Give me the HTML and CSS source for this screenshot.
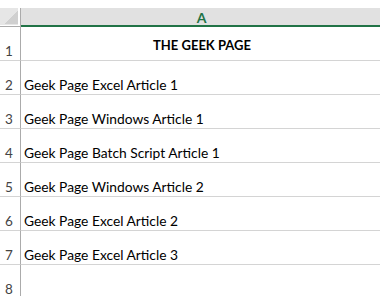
FILE: index.html
```html
<!DOCTYPE html>
<html>
<head>
<meta charset="utf-8">
<link rel="stylesheet" href="styles.css">
</head>
<body>
<div class="sheet">
  <div class="corner"><div class="tri"></div></div>
  <div class="colhead">A</div>

  <div class="rowhead">1</div>
  <div class="cell title">THE GEEK PAGE</div>

  <div class="rowhead">2</div>
  <div class="cell">Geek Page Excel Article 1</div>

  <div class="rowhead">3</div>
  <div class="cell">Geek Page Windows Article 1</div>

  <div class="rowhead">4</div>
  <div class="cell">Geek Page Batch Script Article 1</div>

  <div class="rowhead">5</div>
  <div class="cell">Geek Page Windows Article 2</div>

  <div class="rowhead">6</div>
  <div class="cell">Geek Page Excel Article 2</div>

  <div class="rowhead">7</div>
  <div class="cell">Geek Page Excel Article 3</div>

  <div class="rowhead">8</div>
  <div class="cell"></div>
</div>
</body>
</html>
```
FILE: styles.css
```css
html, body {
  margin: 0;
  padding: 0;
  background: #ffffff;
}
body {
  width: 380px;
  height: 296px;
  overflow: hidden;
  font-family: Lato, "Liberation Sans", sans-serif;
}
.sheet {
  padding-top: 8px;
  display: grid;
  grid-template-columns: 21px 359px;
  grid-template-rows: 19px 34px repeat(7, 34px);
}
.corner {
  border-right: 1px solid #ababab;
  border-bottom: 1px solid #ababab;
  box-sizing: border-box;
  position: relative;
  background: #ffffff;
}
.corner::before {
  content: "";
  position: absolute;
  left: 0; top: 0; right: 2px; bottom: 1px;
  background: #e6e6e6;
}
.tri {
  position: absolute;
  left: 4px;
  top: 2px;
  width: 14px;
  height: 14px;
  background: linear-gradient(135deg, transparent 50%, #d0d0d0 50%);
}
.colhead {
  background: #e1e1e1;
  border-bottom: 2px solid #217346;
  box-sizing: border-box;
  color: #217346;
  font-weight: bold;
  font-size: 14px;
  text-align: center;
  line-height: 19px;
  padding-left: 2px;
}
.rowhead {
  border-right: 1px solid #ababab;
  border-bottom: 1px solid #d4d4d4;
  box-sizing: border-box;
  color: #444444;
  font-size: 13.5px;
  line-height: 18px;
  padding-left: 5px;
  display: flex;
  align-items: flex-end;
}
.cell {
  border-bottom: 1px solid #d4d4d4;
  box-sizing: border-box;
  color: #000000;
  font-size: 13.8px;
  line-height: 18px;
  padding-left: 3px;
  display: flex;
  align-items: flex-end;
  white-space: nowrap;
}
.title {
  justify-content: center;
  align-items: center;
  padding-top: 2px;
  font-weight: bold;
  font-size: 13px;
}
```
